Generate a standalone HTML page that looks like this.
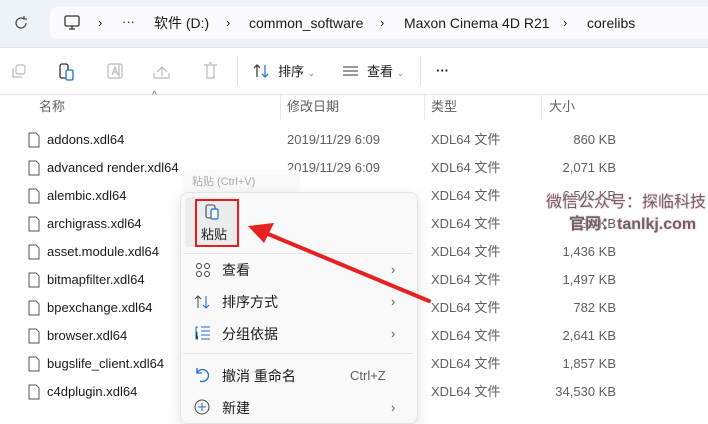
<!DOCTYPE html><html><head><meta charset="utf-8"><style>
body{margin:0;width:708px;height:414px;overflow:hidden;background:#fff;font-family:"Liberation Sans","Noto Sans CJK SC",sans-serif;font-size:13px;line-height:16px;color:#1a1a1a;position:relative}
.a{position:absolute;white-space:nowrap}
.g{color:#5f5f5f}
</style></head><body>
<div class="a" style="left:0;top:0;width:708px;height:47px;background:#eef3f9;border-bottom:1px solid #dfe3e8"></div>
<div class="a" style="left:50px;top:7px;width:670px;height:32px;background:#f9fbfd;border-radius:6px"></div>
<svg class="a" style="left:12px;top:14px" width="18" height="18" viewBox="0 0 18 18"><path d="M14 9a5 5 0 1 1-2-4M12 2v3h3" stroke="#444" fill="none" stroke-width="1.2"/></svg>
<svg class="a" style="left:63px;top:14px" width="18" height="18" viewBox="0 0 18 18"><rect x="2" y="2" width="14" height="10" rx="1.5" stroke="#333" fill="none" stroke-width="1.3"/><path d="M6 15h6M9 12v3" stroke="#333" stroke-width="1.3"/></svg>
<div class="a" style="left:98px;top:15px">›</div><div class="a" style="left:122px;top:14px">···</div>
<div class="a" style="left:154px;top:14px;font-size:14px;line-height:18px">软件 (D:)</div><div class="a" style="left:226px;top:15px">›</div>
<div class="a" style="left:249px;top:14px;font-size:14px;line-height:18px">common_software</div><div class="a" style="left:380px;top:15px">›</div>
<div class="a" style="left:404px;top:14px;font-size:14px;line-height:18px">Maxon Cinema 4D R21</div><div class="a" style="left:563px;top:15px">›</div>
<div class="a" style="left:587px;top:14px;font-size:14px;line-height:18px">corelibs</div>
<div class="a" style="left:0;top:94px;width:708px;height:1px;background:#e5e5e5"></div>
<svg class="a" style="left:0;top:60px" width="230" height="24"><g fill="none" stroke="#bbb" stroke-width="1.2">
<rect x="16" y="5" width="9" height="9" rx="2"/><path d="M13 8v9h9"/>
<rect x="108" y="4" width="14" height="14" rx="2"/><path d="M112 15l3-8 3 8M113 12h4M119 4v14"/>
<path d="M157 12l5-5 5 5M162 7v9M154 13v5h15v-5"/>
<path d="M204 5h13M207 5v13h7V5M209 3h3"/></g>
<rect x="60" y="4" width="8" height="14" rx="2" fill="none" stroke="#333" stroke-width="1.3"/><rect x="66" y="10" width="7" height="10" rx="1.5" fill="#fff" stroke="#1a6fd1" stroke-width="1.3"/></svg>
<div class="a" style="left:237px;top:56px;width:1px;height:30px;background:#e0e0e0"></div>
<svg class="a" style="left:253px;top:63px" width="18" height="16"><path d="M4 14V2M1 5l3-3 3 3" stroke="#333" fill="none" stroke-width="1.2"/><path d="M12 2v12M9 11l3 3 3-3" stroke="#1a6fd1" fill="none" stroke-width="1.2"/></svg>
<div class="a" style="left:278px;top:64px">排序 <span style="font-size:9px;color:#888">⌄</span></div>
<svg class="a" style="left:343px;top:66px" width="16" height="10"><path d="M0 1h15M0 5h15M0 9h15" stroke="#333"/></svg>
<div class="a" style="left:367px;top:64px">查看 <span style="font-size:9px;color:#888">⌄</span></div>
<div class="a" style="left:420px;top:56px;width:1px;height:30px;background:#e0e0e0"></div>
<div class="a" style="left:436px;top:63px;font-weight:bold">···</div>
<div class="a" style="left:152px;top:88px;font-size:10px;color:#666">^</div>
<div class="a" style="left:280px;top:95px;width:1px;height:25px;background:#e8e8e8"></div>
<div class="a" style="left:424px;top:95px;width:1px;height:25px;background:#e8e8e8"></div>
<div class="a" style="left:541px;top:95px;width:1px;height:25px;background:#e8e8e8"></div>
<div class="a g" style="left:39px;top:99px">名称</div><div class="a g" style="left:287px;top:99px">修改日期</div><div class="a g" style="left:431px;top:99px">类型</div><div class="a g" style="left:549px;top:99px">大小</div>
<div id="rows"></div>
<script>
var r=[["addons.xdl64","860"],["advanced render.xdl64","2,071"],["alembic.xdl64","6,542"],["archigrass.xdl64","738"],["asset.module.xdl64","1,436"],["bitmapfilter.xdl64","1,497"],["bpexchange.xdl64","782"],["browser.xdl64","2,641"],["bugslife_client.xdl64","1,857"],["c4dplugin.xdl64","34,530"]],h="";
r.forEach(function(x,i){var y=132+i*28;h+='<svg class="a" style="left:28px;top:'+(y)+'px" width="12" height="16"><path d="M1 1h7l3 3v11H1z" fill="#fff" stroke="#555"/></svg><div class="a" style="left:47px;top:'+y+'px">'+x[0]+'</div>'+(i<2?'<div class="a g" style="left:287px;top:'+y+'px">2019/11/29 6:09</div>':'')+'<div class="a g" style="left:431px;top:'+y+'px">XDL64 文件</div><div class="a g" style="right:92px;top:'+y+'px">'+x[1]+' KB</div>'});
document.getElementById('rows').innerHTML=h;
</script>
<div class="a" style="left:546px;top:193px;font-size:16px;line-height:20px;color:#666;text-shadow:0 0 2px #fcd,0 0 2px #fcd">微信公众号：探临科技</div>
<div class="a" style="left:569px;top:215px;font-size:16px;line-height:20px;color:#666;font-weight:bold;text-shadow:0 0 2px #fcd,0 0 2px #fcd">官网：tanlkj.com</div>
<div class="a" style="left:182px;top:170px;width:118px;height:22px;background:#fafafa;border-radius:4px"></div>
<div class="a" style="left:192px;top:174px;font-size:11px;color:#aaa">粘贴 (Ctrl+V)</div>
<div class="a" style="left:180px;top:192px;width:236px;height:230px;background:#f9f9f9;border:1px solid #e3e3e3;border-radius:8px;box-shadow:0 4px 14px rgba(0,0,0,.12)"></div>
<div class="a" style="left:185px;top:197px;width:55px;height:50px;background:#ececec;border-radius:4px"></div>
<div class="a" style="left:195px;top:199px;width:40px;height:44px;border:2px solid #e02020"></div>
<svg class="a" style="left:205px;top:203px" width="16" height="18"><rect x="1" y="2" width="9" height="13" rx="2" fill="none" stroke="#444" stroke-width="1.1"/><rect x="6" y="6" width="7" height="10" rx="1.5" fill="#f9f9f9" stroke="#1a6fd1" stroke-width="1.2"/></svg>
<div class="a" style="left:201px;top:227px">粘贴</div>
<div class="a" style="left:183px;top:253px;width:230px;height:1px;background:#e3e3e3"></div>
<div class="a" style="left:183px;top:353px;width:230px;height:1px;background:#e3e3e3"></div>
<svg class="a" style="left:195px;top:262px" width="16" height="16"><g fill="none" stroke="#444"><circle cx="4" cy="4" r="2.5"/><circle cx="12" cy="4" r="2.5"/><circle cx="4" cy="12" r="2.5"/><circle cx="12" cy="12" r="2.5"/></g></svg>
<svg class="a" style="left:194px;top:294px" width="18" height="16"><path d="M4 14V2M1 5l3-3 3 3" stroke="#444" fill="none"/><path d="M12 2v12M9 11l3 3 3-3" stroke="#1a6fd1" fill="none"/></svg>
<svg class="a" style="left:195px;top:325px" width="16" height="16"><path d="M1 2h2M1 2v12h2M1 8h2M6 2h9M6 6h9M6 10h9M6 14h9" stroke="#1a6fd1"/></svg>
<svg class="a" style="left:194px;top:366px" width="16" height="18"><path d="M3 2v5h5M3 7a6 6 0 1 1 3 8" stroke="#1a6fd1" fill="none" stroke-width="1.3"/></svg>
<svg class="a" style="left:194px;top:399px" width="16" height="16"><circle cx="8" cy="8" r="7" fill="none" stroke="#444"/><path d="M8 4v8M4 8h8" stroke="#1a6fd1"/></svg>
<div class="a" style="left:222px;top:261px;font-size:14px;line-height:18px">查看</div><div class="a" style="left:222px;top:293px;font-size:14px;line-height:18px">排序方式</div><div class="a" style="left:222px;top:325px;font-size:14px;line-height:18px">分组依据</div><div class="a" style="left:222px;top:367px;font-size:14px;line-height:18px">撤消 重命名</div><div class="a" style="left:222px;top:399px;font-size:14px;line-height:18px">新建</div>
<div class="a g" style="left:350px;top:368px">Ctrl+Z</div>
<div class="a g" style="left:391px;top:262px">›</div><div class="a g" style="left:391px;top:294px">›</div><div class="a g" style="left:391px;top:326px">›</div><div class="a g" style="left:391px;top:400px">›</div>
<svg class="a" style="left:0;top:0" width="708" height="414"><line x1="429" y1="301" x2="268" y2="234" stroke="#e52222" stroke-width="4" stroke-linecap="round"/><path d="M248 226l26-3-10 20z" fill="#e52222"/></svg>
</body></html>
